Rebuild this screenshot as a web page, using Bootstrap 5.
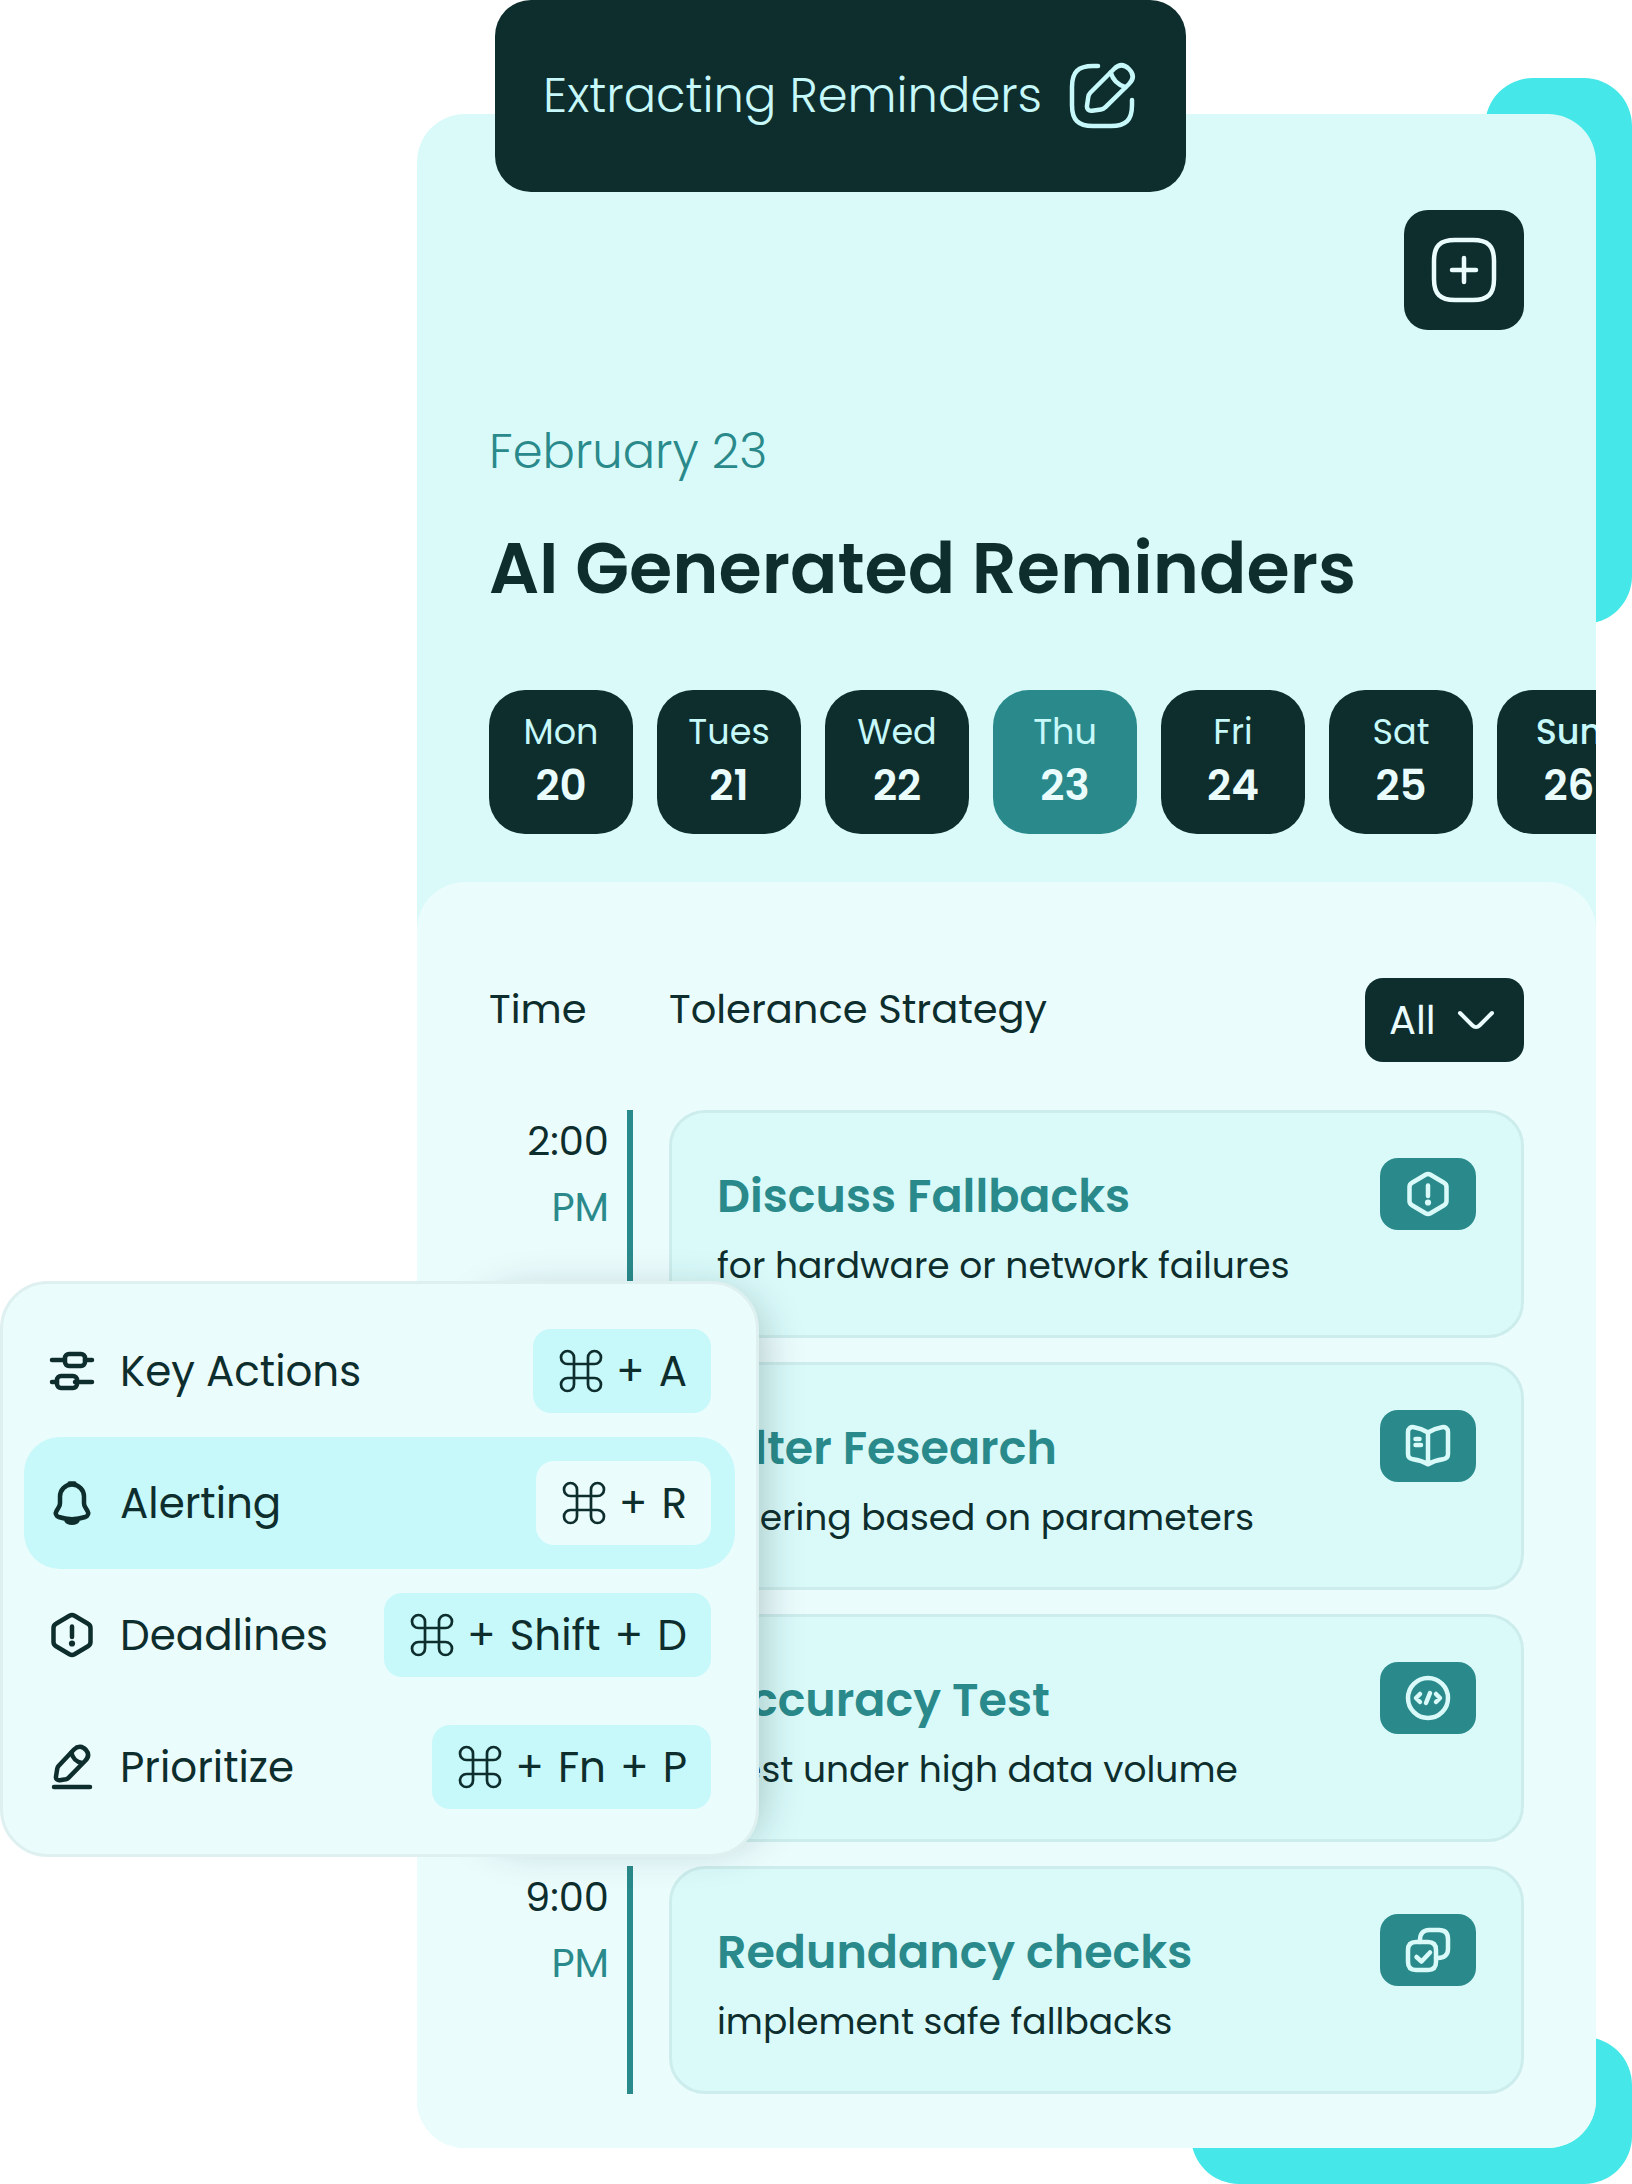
<!DOCTYPE html>
<html lang="en">
<head>
<meta charset="utf-8">
<meta name="viewport" content="width=device-width, initial-scale=1">
<title>AI Generated Reminders</title>
<link href="https://cdn.jsdelivr.net/npm/bootstrap@5.3.0/dist/css/bootstrap.min.css" rel="stylesheet">
<style>
  :root { --ink:#0e2e2d; --teal:#2a8a8b; --aqua:#45e7e8; --mint:#dafafa; --ice:#ebfcfd; --sky:#c7f8fa; }
  body { font-family: Poppins, Inter, "Open Sans", sans-serif; color: var(--ink); background:#fff; }
  svg { display:block; flex:none; fill:none; stroke:currentColor; stroke-linecap:round; stroke-linejoin:round; }
  .stage { padding:114px 36px 36px 417px; overflow:hidden; }
  .accent { position:absolute; background:var(--aqua); border-radius:48px; }
  .accent-top { top:78px; right:0; width:147px; height:546px; }
  .accent-bottom { bottom:0; right:0; width:441px; height:147px; }
  .panel { background:var(--mint); border-radius:48px; }
  .status-tab { position:absolute; top:-114px; left:78px; height:192px; padding:0 48px; gap:24px; border-radius:36px; background:var(--ink); color:var(--sky); font-size:48px; font-weight:300; white-space:nowrap; }
  .hero { padding:96px 72px 0; }
  .add-btn { width:120px; height:120px; border:0; border-radius:24px; background:var(--ink); color:var(--ice); }
  .date-line { margin:86px 0 33px; font-size:48px; line-height:72px; font-weight:300; color:var(--teal); }
  .page-title { margin:0 0 73px; font-size:70px; line-height:96px; font-weight:600; }
  .days { padding:0 0 48px 72px; gap:24px; overflow:hidden; }
  .day { flex:none; width:144px; height:144px; padding:0 0 6px; border:0; border-radius:36px; background:var(--ink); color:var(--sky); font-size:35px; line-height:54px; font-weight:400; }
  .day b { display:block; font-size:42px; font-weight:600; color:var(--ice); }
  .day.current { background:var(--teal); }
  .day.cut { font-weight:500; }
  .agenda { padding:96px 72px 54px; background:var(--ice); border-radius:48px; }
  .agenda-head { margin-bottom:48px; font-size:40px; line-height:62px; }
  .time-head { width:180px; }
  .filter { position:relative; width:159px; height:84px; }
  .filter select { width:100%; height:100%; padding:0 0 0 24px; border:0; border-radius:18px; appearance:none; background:var(--ink); color:var(--ice); }
  .filter svg { position:absolute; right:24px; top:18px; color:var(--ice); pointer-events:none; }
  .slots { gap:24px; }
  .slot { gap:36px; }
  .slot-time { width:144px; padding:1px 18px 0 0; border-right:6px solid var(--teal); font-size:40px; line-height:60px; text-align:right; }
  .slot-time span { display:block; margin-top:6px; color:var(--teal); }
  .task { padding:45px 45px 42px; border:3px solid #cdeded; border-radius:36px; background:var(--mint); }
  .task h2 { margin:0; padding-top:2px; font-size:46px; line-height:72px; font-weight:600; color:var(--teal); }
  .task p { margin:7px 0 0; font-size:36px; line-height:54px; }
  .tag { width:96px; height:72px; border-radius:18px; background:var(--teal); color:var(--mint); }
  .shortcuts { position:absolute; z-index:2; top:1167px; left:-417px; width:759px; }
  .shortcuts::before { content:""; position:absolute; top:12px; bottom:12px; left:474px; right:0; border-radius:48px; box-shadow:3px 0 42px rgba(15,46,45,.26); }
  .shortcut-list { position:relative; padding:21px; border:3px solid #def0f0; border-radius:48px; background:var(--ice); }
  .shortcut { height:132px; padding:0 24px; gap:24px; border:0; border-radius:36px; background:none; color:var(--ink); font-size:42px; text-align:left; }
  .shortcut.selected { background:var(--sky); }
  .keys { height:84px; margin:0 0 0 auto; padding:0 24px; gap:14px; border-radius:18px; background:var(--sky); color:var(--ink); font-family:inherit; font-size:42px; }
  .keys svg { margin-right:-3px; }
  .selected .keys { background:var(--ice); }
</style>
</head>
<body>
<svg width="0" height="0" class="position-absolute" aria-hidden="true">
  <defs>
    <g id="cmd"><path d="M17 17h14v14H17zM17 17h-6.500a6.500 6.500 0 1 1 6.500-6.500zM31 17v-6.500a6.500 6.500 0 1 1 6.500 6.500zM31 31h6.500a6.500 6.500 0 1 1-6.500 6.500zM17 31v6.500a6.500 6.500 0 1 1-6.500-6.500z"/></g>
    <g id="hex"><path d="M21.500 4.800q2.500-1.400 5 0l13.500 8q2.500 1.400 2.500 4.200v14q0 2.800-2.500 4.200l-13.500 8q-2.500 1.400-5 0L8 35.200q-2.500-1.400-2.500-4.200V17q0-2.800 2.500-4.200z"/><path d="M24 15.500v10.500"/><circle cx="24" cy="32.500" r="3.100" fill="currentColor" stroke="none"/></g>
  </defs>
</svg>
<div class="stage position-relative">
  <div class="accent accent-top"></div>
  <div class="accent accent-bottom"></div>

  <main class="panel position-relative">
    <div class="status-tab d-flex align-items-center">
      <span>Extracting Reminders</span>
      <svg width="72" height="72" viewBox="0 0 72 72" stroke-width="4.500"><path d="M32 6h-5C12 6 6 12 6 27v18c0 15 6 21 21 21h18c15 0 21-6 21-21v-5"/><path d="M48 9 24.500 32.500c-1 1-2 2.800-2.200 4.200l-1.300 9c-.5 3.300 1.800 5.500 5 5l9-1.200c1.400-.2 3.300-1.200 4.200-2.200L63 24c4-4 6-9 0-15s-11-4-15 0z"/><path d="M44.700 12.400c2 7.100 7.600 12.700 14.800 14.800"/></svg>
    </div>

    <header class="hero">
      <div class="d-flex justify-content-end">
        <button class="add-btn d-flex align-items-center justify-content-center" type="button" aria-label="Add reminder">
          <svg width="72" height="72" viewBox="0 0 72 72" stroke-width="4.500"><path d="M27 6h18c15 0 21 6 21 21v18c0 15-6 21-21 21H27C12 66 6 60 6 45V27C6 12 12 6 27 6zM36 24v24M24 36h24"/></svg>
        </button>
      </div>
      <p class="date-line">February 23</p>
      <h1 class="page-title">AI Generated Reminders</h1>
    </header>

    <div class="days d-flex">
      <button class="day" type="button">Mon<b>20</b></button>
      <button class="day" type="button">Tues<b>21</b></button>
      <button class="day" type="button">Wed<b>22</b></button>
      <button class="day current" type="button">Thu<b>23</b></button>
      <button class="day" type="button">Fri<b>24</b></button>
      <button class="day" type="button">Sat<b>25</b></button>
      <button class="day cut" type="button">Sun<b>26</b></button>
    </div>

    <section class="agenda">
      <div class="agenda-head d-flex">
        <div class="time-head">Time</div>
        <div class="flex-grow-1">Tolerance Strategy</div>
        <div class="filter">
          <select aria-label="Filter"><option>All</option></select>
          <svg width="48" height="48" viewBox="0 0 48 48" stroke-width="4"><path d="M8 17 20.500 29.500c2 2 5 2 7 0L40 17"/></svg>
        </div>
      </div>

      <div class="slots d-flex flex-column">
        <div class="slot d-flex">
          <div class="slot-time">2:00<span>PM</span></div>
          <article class="task flex-grow-1">
            <div class="d-flex align-items-start justify-content-between"><h2>Discuss Fallbacks</h2>
              <div class="tag d-flex align-items-center justify-content-center"><svg width="48" height="48" viewBox="0 0 48 48" stroke-width="4.500"><use href="#hex"/></svg></div></div>
            <p>for hardware or network failures</p>
          </article>
        </div>
        <div class="slot d-flex">
          <div class="slot-time"></div>
          <article class="task flex-grow-1">
            <div class="d-flex align-items-start justify-content-between"><h2>Filter Fesearch</h2>
              <div class="tag d-flex align-items-center justify-content-center"><svg width="48" height="48" viewBox="0 0 48 48" stroke-width="4.500"><path d="M24 10.500c-4-2.500-9-4.500-14-5.300C6.500 4.700 4 6.500 4 10v22c0 3 2 4.800 5 5.200 5.500.8 10.500 2.300 15 5 4.500-2.700 9.500-4.200 15-5 3-.4 5-2.200 5-5.200V10c0-3.500-2.500-5.300-6-4.800-5 .8-10 2.800-14 5.300zM24 10.500V42M11.500 17h4M11.500 23h5.500"/></svg></div></div>
            <p>filtering based on parameters</p>
          </article>
        </div>
        <div class="slot d-flex">
          <div class="slot-time"></div>
          <article class="task flex-grow-1">
            <div class="d-flex align-items-start justify-content-between"><h2>Accuracy Test</h2>
              <div class="tag d-flex align-items-center justify-content-center"><svg width="48" height="48" viewBox="0 0 48 48" stroke-width="4.500"><circle cx="24" cy="24" r="20"/><path d="m16 20-4 4 4 4M32 20l4 4-4 4M26 19l-4 10"/></svg></div></div>
            <p>Best under high data volume</p>
          </article>
        </div>
        <div class="slot d-flex">
          <div class="slot-time">9:00<span>PM</span></div>
          <article class="task flex-grow-1">
            <div class="d-flex align-items-start justify-content-between"><h2>Redundancy checks</h2>
              <div class="tag d-flex align-items-center justify-content-center"><svg width="48" height="48" viewBox="0 0 48 48" stroke-width="4.500"><path d="M12 16h12c5.500 0 8 2.500 8 8v12c0 5.500-2.500 8-8 8H12c-5.500 0-8-2.500-8-8V24c0-5.500 2.500-8 8-8z"/><path d="M16 16v-2c0-6 3-10 9-10h10c6 0 9 3 9 9v10c0 6-4 9-10 9h-2M12.500 31l5 4.500 8.500-9"/></svg></div></div>
            <p>implement safe fallbacks</p>
          </article>
        </div>
      </div>
    </section>

    <div class="shortcuts">
      <div class="shortcut-list d-flex flex-column">
        <button class="shortcut d-flex align-items-center" type="button">
          <svg width="48" height="48" viewBox="0 0 48 48" stroke-width="4.500"><path d="M4 13h12M44 13h-7M4 35h5M27 35h17"/><rect x="17" y="7" width="20" height="12" rx="4"/><rect x="9" y="29" width="20" height="12" rx="4"/></svg>
          <span>Key Actions</span>
          <kbd class="keys d-flex align-items-center"><svg width="48" height="48" viewBox="0 0 48 48" stroke-width="2.700"><use href="#cmd"/></svg><span>+</span><span>A</span></kbd>
        </button>
        <button class="shortcut selected d-flex align-items-center" type="button">
          <svg width="48" height="48" viewBox="0 0 48 48" stroke-width="4.500"><path d="M24 5.500c-7 0-12 5.500-12 12v6.500c0 1.300-.5 3-1.200 4.200l-2.300 3.800c-1.500 2.500-.5 5 2.200 6 8.500 2.800 18 2.800 26.600 0 2.700-1 3.700-3.500 2.200-6l-2.300-3.800c-.7-1.200-1.200-2.900-1.200-4.200v-6.500c0-6.500-5-12-12-12zM21.500 4.500h5M18.500 41.500c1.500 3 9.500 3 11 0"/></svg>
          <span>Alerting</span>
          <kbd class="keys d-flex align-items-center"><svg width="48" height="48" viewBox="0 0 48 48" stroke-width="2.700"><use href="#cmd"/></svg><span>+</span><span>R</span></kbd>
        </button>
        <button class="shortcut d-flex align-items-center" type="button">
          <svg width="48" height="48" viewBox="0 0 48 48" stroke-width="4.500"><use href="#hex"/></svg>
          <span>Deadlines</span>
          <kbd class="keys d-flex align-items-center"><svg width="48" height="48" viewBox="0 0 48 48" stroke-width="2.700"><use href="#cmd"/></svg><span>+</span><span>Shift</span><span>+</span><span>D</span></kbd>
        </button>
        <button class="shortcut d-flex align-items-center" type="button">
          <svg width="48" height="48" viewBox="0 0 48 48" stroke-width="4.500"><path d="M26 6.500 10.500 23c-.6.700-1.200 2-1.300 2.900L8 33.500c-.4 2.500 1.400 4 3.800 3.700l6-1c.9-.2 2.200-.9 2.900-1.600L37 18c3.500-3.500 4.500-7 1-11s-8-4.500-12-.5z"/><path d="M23.500 9.500c.8 5.500 5 9.500 10.500 10.500M6 44h36"/></svg>
          <span>Prioritize</span>
          <kbd class="keys d-flex align-items-center"><svg width="48" height="48" viewBox="0 0 48 48" stroke-width="2.700"><use href="#cmd"/></svg><span>+</span><span>Fn</span><span>+</span><span>P</span></kbd>
        </button>
      </div>
    </div>
  </main>
</div>
<script src="https://cdn.jsdelivr.net/npm/bootstrap@5.3.0/dist/js/bootstrap.bundle.min.js"></script>
</body>
</html>
